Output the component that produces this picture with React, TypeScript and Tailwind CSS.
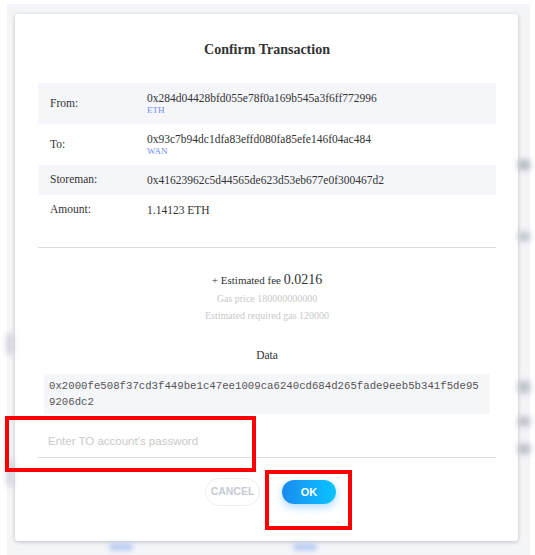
import React from 'react';

const rows = [
  { label: 'From:', value: '0x284d04428bfd055e78f0a169b545a3f6ff772996', chain: 'ETH', shaded: true, tall: true },
  { label: 'To:', value: '0x93c7b94dc1dfa83effd080fa85efe146f04ac484', chain: 'WAN', shaded: false, tall: true },
  { label: 'Storeman:', value: '0x41623962c5d44565de623d53eb677e0f300467d2', chain: '', shaded: true, tall: false },
  { label: 'Amount:', value: '1.14123 ETH', chain: '', shaded: false, tall: false },
];

const App: React.FC = () => {
  return (
    <div className="relative w-[535px] h-[555px] overflow-hidden bg-white font-['Liberation_Serif',serif] text-[#333]">
      <div className="ml-[7px] mr-[5px] mt-[4px] h-[551px] bg-[#f3f5f9] flex">
        {/* blurred page behind the dialog, left edge */}
        <div className="w-[8px] flex flex-col">
          <div className="mt-[330px] h-[20px] w-[6px] bg-[#c9cdd6] blur-[3px]"></div>
          <div className="mt-[106px] h-[26px] w-[6px] bg-[#ccd0d8] blur-[3px]"></div>
        </div>

        <div className="w-[503px] flex flex-col pt-[10px]">
          <div className="h-[527px] bg-white rounded-[3px] shadow-[0_1px_4px_rgba(0,0,0,0.22)] px-[22px] pl-[23px] pt-[26px] flex flex-col">
            <h2 className="h-[20px] leading-[20px] text-center text-[14px] font-bold text-[#333]">
              Confirm Transaction
            </h2>

            <div className="mt-[23px] w-[458px] flex flex-col text-[11.5px]">
              {rows.map((r) => (
                <div
                  key={r.label}
                  className={`flex items-center ${r.tall ? 'h-[41px]' : 'h-[30px]'} ${r.shaded ? 'bg-[#f5f6fa]' : 'bg-white'}`}
                >
                  <div className="w-[109px] pl-[12px]">{r.label}</div>
                  <div className="flex flex-col">
                    <span className="leading-[13px]">{r.value}</span>
                    {r.chain && (
                      <span className="text-[9px] leading-[10px] text-[#6c8ef2]">{r.chain}</span>
                    )}
                  </div>
                </div>
              ))}
            </div>

            <div className="mt-[22px] w-[458px] h-px bg-[#dcdcdc]"></div>

            <div className="mt-[22px] h-[20px] leading-[20px] text-center text-[11px]">
              + Estimated fee <span className="text-[14px]">0.0216</span>
            </div>
            <div className="text-center text-[10px] leading-[17px] text-[#c9c9c9]">Gas price 180000000000</div>
            <div className="text-center text-[10px] leading-[17px] text-[#c9c9c9]">Estimated required gas 120000</div>

            <div className="mt-[23px] text-center text-[11.5px] leading-[16px]">Data</div>

            <div className="mt-[11px] mx-[6px] w-[446px] bg-[#f5f6fa] py-[4px] pl-[5px] font-['Liberation_Mono',monospace] text-[10.7px] leading-[16px] text-[#555]">
              <span className="block">0x2000fe508f37cd3f449be1c47ee1009ca6240cd684d265fade9eeb5b341f5de95</span>
              <span className="block">9206dc2</span>
            </div>

            <div className="mt-[11px] w-[458px] h-[33px] border-b border-[#dddddd] flex items-center">
              <input
                type="password"
                placeholder="Enter TO account's password"
                className="w-full pl-[10px] pt-[1px] outline-none bg-transparent font-['Liberation_Sans',sans-serif] text-[11.5px] placeholder:text-[#c9c9c9]"
              />
            </div>

            <div className="mt-[20px] flex items-center justify-center gap-[22px] pl-[7px] font-['Liberation_Sans',sans-serif] font-bold">
              <button className="w-[55px] h-[28px] rounded-full border border-[#eceef3] bg-white text-[10.5px] text-[#c6cad6]">
                CANCEL
              </button>
              <button className="w-[54px] h-[24px] rounded-full bg-gradient-to-r from-[#1a8cf0] to-[#0ac4ff] text-[11px] text-white shadow-[0_3px_8px_rgba(20,150,255,0.35)]">
                OK
              </button>
            </div>
          </div>

          {/* blurred page behind the dialog, bottom edge */}
          <div className="flex mt-[2px]">
            <div className="ml-[94px] w-[24px] h-[8px] rounded-full bg-[#bfd0f3] blur-[2px]"></div>
            <div className="ml-[160px] w-[24px] h-[8px] rounded-full bg-[#bfd0f3] blur-[2px]"></div>
          </div>
        </div>

        {/* blurred page behind the dialog, right edge */}
        <div className="w-[12px] flex flex-col">
          <div className="mt-[156px] h-[10px] w-[12px] bg-[#b3b7c0] blur-[3px]"></div>
          <div className="mt-[62px] h-[9px] w-[12px] bg-[#c0c4cc] blur-[3px]"></div>
          <div className="mt-[140px] h-[12px] w-[12px] bg-[#bcc0c8] blur-[3px]"></div>
          <div className="mt-[24px] h-[9px] w-[12px] bg-[#b8bcc4] blur-[3px]"></div>
          <div className="mt-[18px] h-[10px] w-[12px] bg-[#b8bcc4] blur-[3px]"></div>
        </div>
      </div>

      {/* red annotation boxes */}
      <div className="absolute left-[5px] top-[416px] w-[251px] h-[56px] border-4 border-[#ff0000]"></div>
      <div className="absolute left-[265px] top-[470px] w-[87px] h-[60px] border-4 border-[#ff0000]"></div>
    </div>
  );
};

export default App;
